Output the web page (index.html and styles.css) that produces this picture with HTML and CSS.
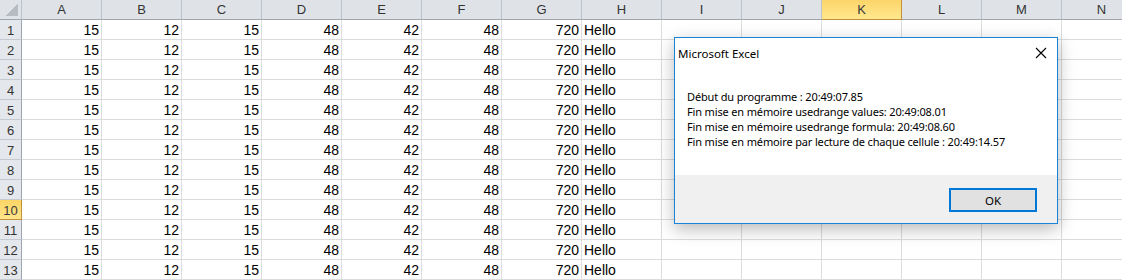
FILE: index.html
```html
<!DOCTYPE html>
<html>
    <head>
        <meta charset="utf-8" />
        <title>Microsoft Excel</title>
        <link rel="stylesheet" href="styles.css">
    </head>
    <body>
        <div class="sheet">
            <div class="ch corner"></div>
            <div class="ch">A</div><div class="ch">B</div><div class="ch">C</div><div class="ch">D</div><div class="ch">E</div><div class="ch">F</div><div class="ch">G</div>
            <div class="ch">H</div><div class="ch">I</div><div class="ch">J</div><div class="ch sel">K</div><div class="ch">L</div><div class="ch">M</div><div class="ch">N</div>

            <div class="rh">1</div><div class="n">15</div><div class="n">12</div><div class="n">15</div><div class="n">48</div><div class="n">42</div><div class="n">48</div><div class="n">720</div><div class="t">Hello</div><div></div><div></div><div></div><div></div><div></div><div></div>
            <div class="rh">2</div><div class="n">15</div><div class="n">12</div><div class="n">15</div><div class="n">48</div><div class="n">42</div><div class="n">48</div><div class="n">720</div><div class="t">Hello</div><div></div><div></div><div></div><div></div><div></div><div></div>
            <div class="rh">3</div><div class="n">15</div><div class="n">12</div><div class="n">15</div><div class="n">48</div><div class="n">42</div><div class="n">48</div><div class="n">720</div><div class="t">Hello</div><div></div><div></div><div></div><div></div><div></div><div></div>
            <div class="rh">4</div><div class="n">15</div><div class="n">12</div><div class="n">15</div><div class="n">48</div><div class="n">42</div><div class="n">48</div><div class="n">720</div><div class="t">Hello</div><div></div><div></div><div></div><div></div><div></div><div></div>
            <div class="rh">5</div><div class="n">15</div><div class="n">12</div><div class="n">15</div><div class="n">48</div><div class="n">42</div><div class="n">48</div><div class="n">720</div><div class="t">Hello</div><div></div><div></div><div></div><div></div><div></div><div></div>
            <div class="rh">6</div><div class="n">15</div><div class="n">12</div><div class="n">15</div><div class="n">48</div><div class="n">42</div><div class="n">48</div><div class="n">720</div><div class="t">Hello</div><div></div><div></div><div></div><div></div><div></div><div></div>
            <div class="rh">7</div><div class="n">15</div><div class="n">12</div><div class="n">15</div><div class="n">48</div><div class="n">42</div><div class="n">48</div><div class="n">720</div><div class="t">Hello</div><div></div><div></div><div></div><div></div><div></div><div></div>
            <div class="rh">8</div><div class="n">15</div><div class="n">12</div><div class="n">15</div><div class="n">48</div><div class="n">42</div><div class="n">48</div><div class="n">720</div><div class="t">Hello</div><div></div><div></div><div></div><div></div><div></div><div></div>
            <div class="rh">9</div><div class="n">15</div><div class="n">12</div><div class="n">15</div><div class="n">48</div><div class="n">42</div><div class="n">48</div><div class="n">720</div><div class="t">Hello</div><div></div><div></div><div></div><div></div><div></div><div></div>
            <div class="rh sel">10</div><div class="n">15</div><div class="n">12</div><div class="n">15</div><div class="n">48</div><div class="n">42</div><div class="n">48</div><div class="n">720</div><div class="t">Hello</div><div></div><div></div><div></div><div></div><div></div><div></div>
            <div class="rh">11</div><div class="n">15</div><div class="n">12</div><div class="n">15</div><div class="n">48</div><div class="n">42</div><div class="n">48</div><div class="n">720</div><div class="t">Hello</div><div></div><div></div><div></div><div></div><div></div><div></div>
            <div class="rh">12</div><div class="n">15</div><div class="n">12</div><div class="n">15</div><div class="n">48</div><div class="n">42</div><div class="n">48</div><div class="n">720</div><div class="t">Hello</div><div></div><div></div><div></div><div></div><div></div><div></div>
            <div class="rh">13</div><div class="n">15</div><div class="n">12</div><div class="n">15</div><div class="n">48</div><div class="n">42</div><div class="n">48</div><div class="n">720</div><div class="t">Hello</div><div></div><div></div><div></div><div></div><div></div><div></div>
        </div>

        <div class="msgbox">
            <div class="msgbox-title">
                <span>Microsoft Excel</span>
                <svg class="close" width="12" height="12" viewBox="0 0 12 12">
                    <path d="M1 1 L11 11 M11 1 L1 11" stroke="#000" stroke-width="1.1" fill="none" />
                </svg>
            </div>
            <div class="msgbox-body">
                <p>Début du programme : 20:49:07.85</p>
                <p>Fin mise en mémoire usedrange values: 20:49:08.01</p>
                <p>Fin mise en mémoire usedrange formula: 20:49:08.60</p>
                <p>Fin mise en mémoire par lecture de chaque cellule : 20:49:14.57</p>
            </div>
            <div class="msgbox-footer">
                <button class="ok">OK</button>
            </div>
        </div>
    </body>
</html>
```
FILE: styles.css
```css
body {
	margin: 0;
	overflow: hidden;
	background: #fff;
}

.sheet {
	display: grid;
	grid-template-columns: 22px repeat(14, 80px);
	grid-auto-rows: 20px;
	font-family: "Liberation Sans", Arial, sans-serif;
	font-size: 14px;
	color: #000;
}

.sheet > div {
	box-sizing: border-box;
	border-right: 1px solid #dadcdd;
	border-bottom: 1px solid #dadcdd;
	line-height: 19px;
	padding-top: 1px;
	white-space: nowrap;
	overflow: hidden;
}

.sheet .ch {
	background: #dfe3e8;
	border-right: 1px solid #bcc2c9;
	border-bottom: 1px solid #9da4ad;
	color: #333;
	font-size: 13px;
	text-align: center;
	padding-top: 0;
}

.sheet .corner {
	background: #dfe3e8 linear-gradient(135deg, transparent 50%, #b7bcc3 50%) no-repeat right 3px bottom 3px / 12px 12px;
}

.sheet .rh {
	background: #e4e7eb;
	border-right: 1px solid #9da4ad;
	border-bottom: 1px solid #c5cad0;
	color: #333;
	font-size: 13px;
	text-align: center;
}

.sheet .sel {
	background: linear-gradient(#fcd56a, #ffe88e);
	border-right: 1px solid #c2913b;
	border-bottom: 1px solid #c2913b;
	color: #3a3a3a;
}

.sheet .rh.sel {
	background: linear-gradient(#fbd565, #ffe58a);
}

.sheet .n {
	text-align: right;
	padding-right: 2px;
}

.sheet .t {
	padding-left: 2px;
}

.msgbox {
	position: absolute;
	left: 674px;
	top: 37px;
	width: 384px;
	box-sizing: border-box;
	border: 1px solid #1883d7;
	background: #fff;
	box-shadow: 0 5px 16px rgba(0, 0, 0, 0.28);
	font-family: "Noto Sans", sans-serif;
	font-size: 11px;
	color: #000;
}

.msgbox-title {
	height: 30px;
	display: flex;
	align-items: center;
	justify-content: space-between;
	padding: 0 10px 0 3px;
	font-size: 11.5px;
}

.msgbox-title .close {
	margin-top: -1px;
}

.msgbox-body {
	padding: 21px 12px 26px 12px;
}

.msgbox-body p {
	margin: 0;
	line-height: 15px;
	letter-spacing: -0.15px;
	white-space: nowrap;
}

.msgbox-footer {
	background: #f0f0f0;
	height: 48px;
	display: flex;
	justify-content: flex-end;
	align-items: flex-start;
	padding: 13px 20px 0 0;
	box-sizing: border-box;
}

.ok {
	width: 88px;
	height: 24px;
	box-sizing: border-box;
	border: 2px solid #0078d7;
	background: #e1e1e1;
	font-family: "Noto Sans", sans-serif;
	font-size: 11.5px;
	color: #000;
	padding: 0;
}
```
